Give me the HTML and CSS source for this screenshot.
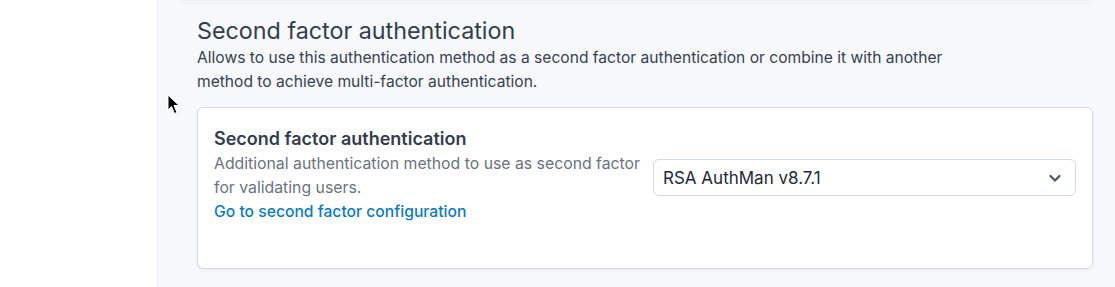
FILE: index.html
```html
<!DOCTYPE html>
<html lang="en">
<head>
    <meta charset="UTF-8">
    <title>Second factor authentication</title>
    <link rel="stylesheet" href="styles.css">
</head>
<body>
    <div class="layout">
        <aside class="sidebar"></aside>

        <main class="content">
            <div class="prevCard"></div>

            <section class="section">
                <h2>Second factor authentication</h2>
                <p class="sectionDesc">Allows to use this authentication method as a second factor authentication or combine it with another method to achieve multi-factor authentication.</p>

                <div class="card">
                    <div class="fieldInfo">
                        <h3>Second factor authentication</h3>
                        <p class="fieldDesc">Additional authentication method to use as second factor for validating users.</p>
                        <a href="#" class="link">Go to second factor configuration</a>
                    </div>

                    <div class="fieldControl">
                        <div class="select">
                            <span>RSA AuthMan v8.7.1</span>
                            <svg width="16" height="16" viewBox="0 0 16 16"><path d="M3.5 6 L8 10.5 L12.5 6" fill="none" stroke="#4b5563" stroke-width="2.2" stroke-linecap="round" stroke-linejoin="round"/></svg>
                        </div>
                    </div>
                </div>
            </section>
        </main>
    </div>

    <svg class="cursor" width="14" height="22" viewBox="0 0 14 22">
        <path d="M1 1 L1 16 L4.5 12.5 L7.5 19.5 L10 18.5 L7 11.5 L12 11.5 Z" fill="#000" stroke="#fff" stroke-width="1"/>
    </svg>
</body>
</html>
```

FILE: styles.css
```css
body {
    margin: 0;
    font-family: Inter, "Noto Sans", sans-serif;
    color: #374151;
    background-color: #f6f8fb;
}

.layout {
    display: flex;
    min-height: 287px;
}

.sidebar {
    width: 157px;
    background-color: #ffffff;
    border-right: 1px solid #eef1f5;
}

.content {
    flex: 1;
    padding: 0 22px 0 39px;
}

.prevCard {
    height: 3px;
    margin-left: -16px;
    background-color: #f3f5f8;
    border-radius: 0 0 6px 6px;
    box-shadow: 0 1px 2px rgba(30, 41, 59, 0.05);
}

.section h2 {
    margin: 12px 0 0;
    font-size: 23.3px;
    font-weight: 400;
    line-height: 32px;
    color: #333d4b;
}

.sectionDesc {
    margin: -1px 0 0;
    max-width: 770px;
    font-size: 15.6px;
    line-height: 24px;
    color: #374151;
}

.card {
    margin-top: 13px;
    height: 162px;
    box-sizing: border-box;
    padding: 18px 16px 16px;
    background-color: #ffffff;
    border: 1px solid #d3dae5;
    border-radius: 6px;
    box-shadow: 0 1px 3px rgba(30, 41, 59, 0.06);
    display: flex;
    gap: 8px;
}

.fieldInfo {
    width: 431px;
}

.fieldInfo h3 {
    margin: 0;
    font-size: 18px;
    font-weight: 600;
    line-height: 26px;
    color: #333d4b;
}

.fieldDesc {
    margin: 0;
    font-size: 15.8px;
    line-height: 24px;
    color: #6b7280;
}

.link {
    display: block;
    font-size: 15.7px;
    line-height: 24px;
    color: #0b7bc4;
    text-decoration: none;
    font-weight: 500;
}

.fieldControl {
    flex: 1;
    padding-top: 33px;
}

.select {
    height: 37px;
    box-sizing: border-box;
    padding: 0 12px 0 9px;
    border: 1px solid #d3dae5;
    border-radius: 6px;
    display: flex;
    align-items: center;
    justify-content: space-between;
    font-size: 17px;
    color: #1f2937;
}

.cursor {
    position: absolute;
    left: 167px;
    top: 94px;
}
```
